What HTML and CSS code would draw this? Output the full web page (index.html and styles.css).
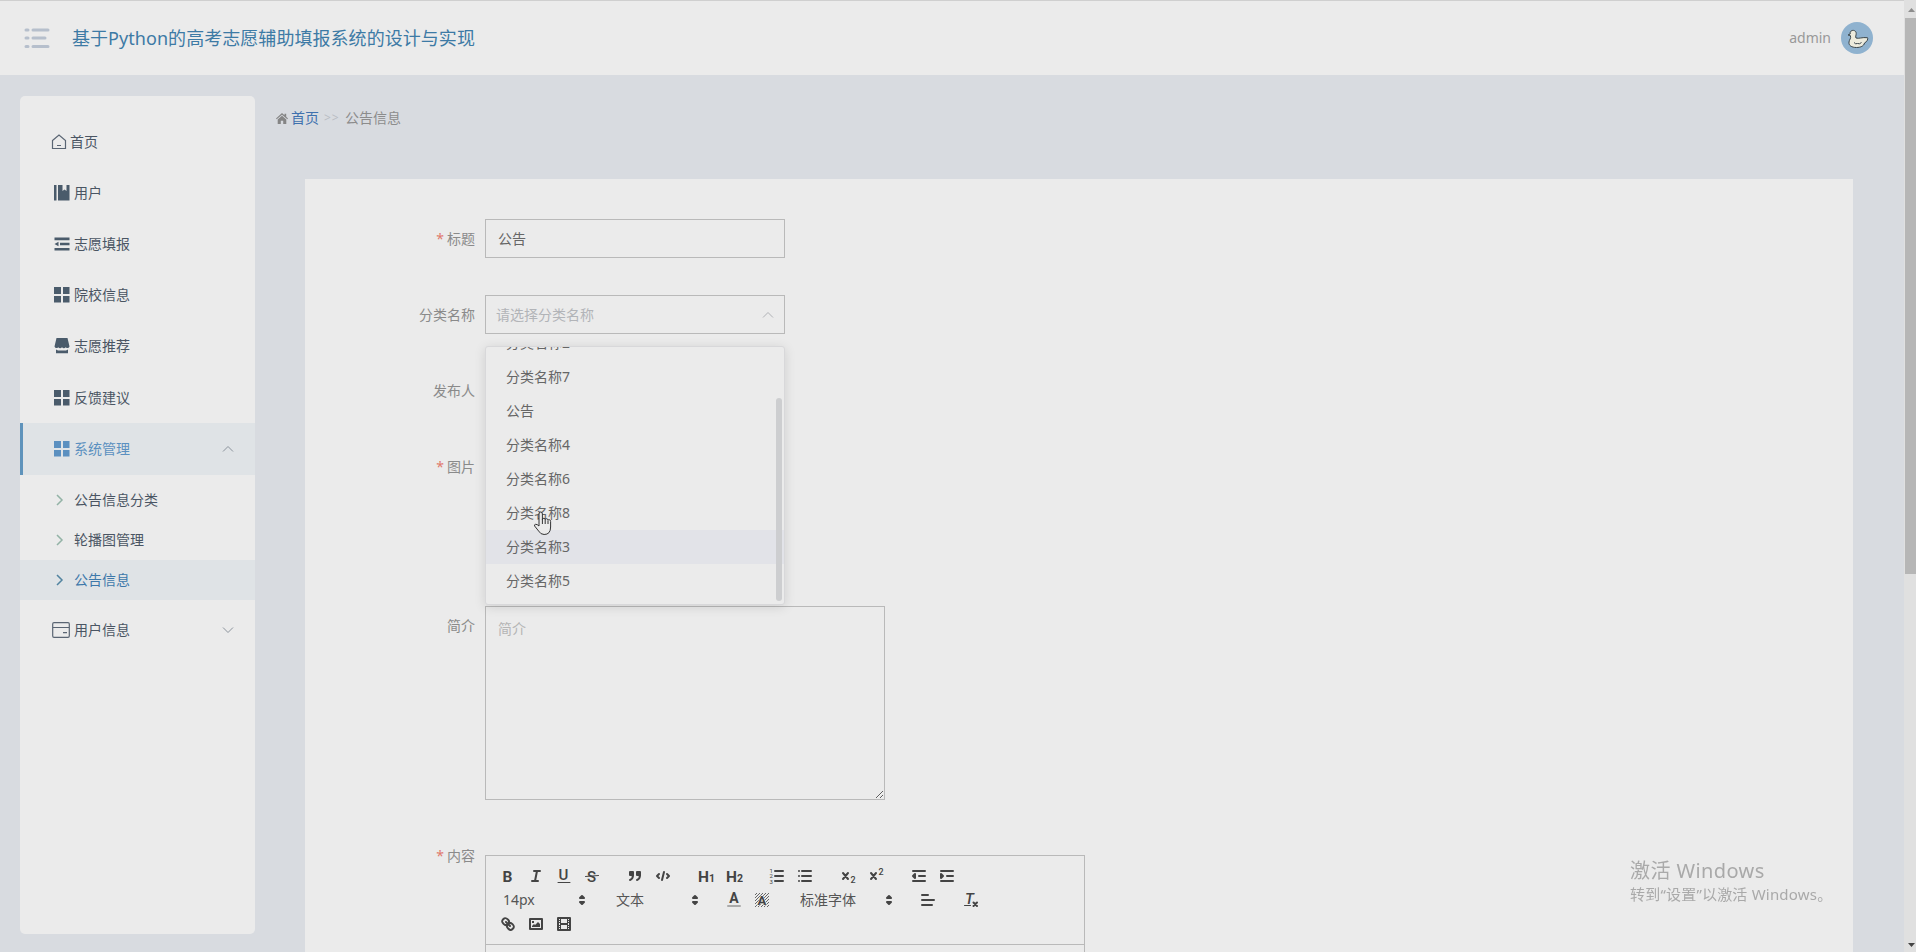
FILE: index.html
```
<!DOCTYPE html>
<html lang="zh-CN">
<head>
  <meta charset="UTF-8">
  <title>基于Python的高考志愿辅助填报系统的设计与实现</title>
  <link rel="stylesheet" href="styles.css">
</head>
<body>
  <div class="page">
    <header class="header">
      <svg class="fold" width="28" height="22" viewBox="0 0 28 22">
        <path d="M2 3h2M9 3h15M2 11h2M9 11h12M2 19.500h2M9 19.500h15"/>
      </svg>
      <h1>基于Python的高考志愿辅助填报系统的设计与实现</h1>
      <span class="user">admin</span>
      <svg class="avatar" width="32" height="32" viewBox="0 0 32 32">
        <circle cx="16" cy="16" r="16" fill="#8fb2cf"/>
        <path d="M7 13l2.200-1c-1-4.500 6-5 6-.5 0 2-1 3-.2 4.500 3 1 6-1 11.500-.3.800 1-.2 4-3 5.300-.5 3-4 4.500-8 4.500-5 0-8-2-7.500-5.500.2-2.500 2.500-3.500 1.300-6.500z" fill="#ecebdd" stroke="#39454b" stroke-linejoin="round"/>
        <path d="M13 20.500q1.500 2 3.500 1 2 1 4-1" fill="none" stroke="#39454b"/>
      </svg>
    </header>

    <div class="layout">
      <nav class="sidebar">
        <a class="item home">
          <svg width="16" height="16" viewBox="0 0 16 16" class="line"><path d="M1.500 6.500L8 1l6.500 5.500v8h-13zM6 11.500h4"/></svg>首页
        </a>
        <a class="item">
          <svg width="16" height="16" viewBox="0 0 16 16"><path d="M0 0h2.500v15.500H0zM4 0h4.500v6l2-1.500 2 1.500V0h3v15.500H4z"/></svg>用户
        </a>
        <a class="item">
          <svg width="16" height="16" viewBox="0 0 16 16"><path d="M.5 1.500h15v2.700H.5zM6 6.800h9.500v2.500H6zM.5 8l4-2.300v4.600zM.5 12h15v2.500H.5z"/></svg>志愿填报
        </a>
        <a class="item">
          <svg width="16" height="16" viewBox="0 0 16 16"><path d="M0 0h7v7H0zM9 0h6.500v7H9zM0 9h7v6.500H0zM9 9h6.500v6.500H9z"/></svg>院校信息
        </a>
        <a class="item">
          <svg width="16" height="16" viewBox="0 0 16 16"><path d="M2.500 0h11l2 8.500c-1 2-2.500 2-3.700.700-1.300 1.300-2.500 1.300-3.800 0-1.300 1.300-2.500 1.300-3.800 0C3 10.500 1.500 10.500.5 8.500zM2 11.500l2 1h8l2-1v3.800H2z"/></svg>志愿推荐
        </a>
        <a class="item">
          <svg width="16" height="16" viewBox="0 0 16 16"><path d="M0 0h7v7H0zM9 0h6.500v7H9zM0 9h7v6.500H0zM9 9h6.500v6.500H9z"/></svg>反馈建议
        </a>
        <a class="item active">
          <svg width="16" height="16" viewBox="0 0 16 16"><path d="M0 0h7v7H0zM9 0h6.500v7H9zM0 9h7v6.500H0zM9 9h6.500v6.500H9z"/></svg>系统管理
          <svg class="arrow" width="12" height="8" viewBox="0 0 12 8"><path d="M1 6.500l5-5 5 5"/></svg>
        </a>
        <div class="submenu">
          <a class="sub"><svg width="8" height="12" viewBox="0 0 8 12"><path d="M1 1l5 5-5 5"/></svg>公告信息分类</a>
          <a class="sub"><svg width="8" height="12" viewBox="0 0 8 12"><path d="M1 1l5 5-5 5"/></svg>轮播图管理</a>
          <a class="sub current"><svg width="8" height="12" viewBox="0 0 8 12"><path d="M1 1l5 5-5 5"/></svg>公告信息</a>
        </div>
        <a class="item card">
          <svg width="18" height="16" viewBox="0 0 18 16" class="line"><path d="M.7 2Q.7.700 2 .700h14q1.300 0 1.300 1.300v12q0 1.300-1.300 1.300H2Q.7 15.300.7 14zM.7 5.500h16.600M11 10.700h4"/></svg>用户信息
          <svg class="arrow" width="12" height="8" viewBox="0 0 12 8"><path d="M1 1.500l5 5 5-5"/></svg>
        </a>
      </nav>

      <main class="content">
        <div class="breadcrumb">
          <svg width="12" height="11" viewBox="0 0 12 11"><path d="M6 0l2.500 2.300V.8h1.700v3L12 5.500l-.7.800L6 1.700.7 6.300 0 5.500zM6 2.700l4.300 3.700V11H7.200V7.700H4.800V11H1.700V6.400z"/></svg>
          <a>首页</a><span class="sep">&gt;&gt;</span><span>公告信息</span>
        </div>

        <form class="panel">
          <div class="row">
            <label class="required">标题</label>
            <input class="input" type="text" value="公告">
          </div>
          <div class="row">
            <label>分类名称</label>
            <div class="select">
              <span>请选择分类名称</span>
              <svg width="12" height="8" viewBox="0 0 12 8"><path d="M1 6.500l5-5 5 5"/></svg>
              <ul class="dropdown">
                <li>分类名称2</li>
                <li>分类名称7</li>
                <li>公告</li>
                <li>分类名称4</li>
                <li>分类名称6</li>
                <li>分类名称8</li>
                <li class="hover">分类名称3</li>
                <li>分类名称5</li>
              </ul>
              <i class="drop-thumb"></i>
            </div>
          </div>
          <div class="row">
            <label>发布人</label>
          </div>
          <div class="row upload">
            <label class="required">图片</label>
          </div>
          <div class="row">
            <label>简介</label>
            <textarea class="textarea" placeholder="简介"></textarea>
          </div>
          <div class="row">
            <label class="required">内容</label>
            <div class="editor">
              <div class="toolbar">
                <span class="formats">
                  <svg viewBox="0 0 18 18"><text x="3.500" y="14.800" class="b" font-size="15.500">B</text></svg>
                  <svg viewBox="0 0 18 18"><path class="slant" d="M7 4h6M5 14h6M8 14l2-10"/></svg>
                  <svg viewBox="0 0 18 18"><text x="3.600" y="13" font-size="15" class="m">U</text><path class="thin" d="M3 15.500h12"/></svg>
                  <svg viewBox="0 0 18 18"><text x="4" y="14.500" font-size="15" class="m">S</text><path class="thin" d="M2.500 9.500l13-1"/></svg>
                </span>
                <span class="formats">
                  <svg viewBox="0 0 18 18"><path class="both" d="M4 5h3v3H4zM11 5h3v3h-3z"/><path d="M7 8c0 4-3 5-3 5M14 8c0 4-3 5-3 5"/></svg>
                  <svg viewBox="0 0 18 18"><path d="M5 7L3 9l2 2M13 7l2 2-2 2M10 5L8 13"/></svg>
                </span>
                <span class="formats">
                  <svg viewBox="0 0 18 18"><text x="1" y="14.500" class="b" font-size="15.500">H</text><text x="12" y="14.500" class="b" font-size="10.500">1</text></svg>
                  <svg viewBox="0 0 18 18"><text x="1" y="14.500" class="b" font-size="15.500">H</text><text x="12" y="14.500" class="b" font-size="10.500">2</text></svg>
                </span>
                <span class="formats">
                  <svg viewBox="0 0 18 18"><path d="M7 4h8M7 9h8M7 14h8"/><text x="1.500" y="6" font-size="6">1</text><text x="1.500" y="11" font-size="6">2</text><text x="1.500" y="16.500" font-size="6">3</text></svg>
                  <svg viewBox="0 0 18 18"><path d="M6 4h9M6 9h9M6 14h9M3 4h0M3 9h0M3 14h0"/></svg>
                </span>
                <span class="formats">
                  <svg viewBox="0 0 18 18"><path d="M4 6l5 6M9 6l-5 6"/><text x="11.500" y="15.500" class="m" font-size="9">2</text></svg>
                  <svg viewBox="0 0 18 18"><path d="M4 6l5 6M9 6l-5 6"/><text x="11.500" y="8" class="m" font-size="9">2</text></svg>
                </span>
                <span class="formats">
                  <svg viewBox="0 0 18 18"><path d="M3 14h12M3 4h12M9 9h6"/><path class="both" d="M5 7v4L3 9z"/></svg>
                  <svg viewBox="0 0 18 18"><path d="M3 14h12M3 4h12M9 9h6"/><path class="both" d="M3 7v4l2-2z"/></svg>
                </span>
                <span class="formats">
                  <span class="picker">14px<svg viewBox="0 0 18 18"><path class="both" d="M7 11l2 2 2-2zM7 7l2-2 2 2z"/></svg></span>
                </span>
                <span class="formats">
                  <span class="picker">文本<svg viewBox="0 0 18 18"><path class="both" d="M7 11l2 2 2-2zM7 7l2-2 2 2z"/></svg></span>
                </span>
                <span class="formats">
                  <svg viewBox="0 0 18 18"><text x="4.300" y="12" class="b" font-size="14">A</text><path class="bar" d="M3 15h12"/></svg>
                  <svg viewBox="0 0 18 18">
                    <defs><pattern id="hatch" width="3" height="3" patternUnits="userSpaceOnUse"><path class="hatch" d="M-1 1l2-2M0 3l3-3M2 4l2-2"/></pattern></defs>
                    <path class="hatched" d="M2 2h14v14H2z"/><text x="4.500" y="14" class="b halo" font-size="13">A</text>
                  </svg>
                </span>
                <span class="formats">
                  <span class="picker font">标准字体<svg viewBox="0 0 18 18"><path class="both" d="M7 11l2 2 2-2zM7 7l2-2 2 2z"/></svg></span>
                </span>
                <span class="formats">
                  <svg viewBox="0 0 18 18"><path d="M3 4h6M5 9h10M3 9h2M3 14h10"/></svg>
                </span>
                <span class="formats">
                  <svg viewBox="0 0 18 18"><text x="3" y="13" class="m it" font-size="15">T</text><path class="thin" d="M2.500 14.500h6"/><path d="M11.500 11.500l3.500 3.500M15 11.500L11.500 15"/></svg>
                </span>
                <span class="formats">
                  <svg viewBox="0 0 18 18"><path d="M7 7l4 4M8.900 4.577a3.476 3.476 0 0 1 .36 4.679A3.476 3.476 0 0 1 4.577 8.900C3.185 7.500 2.035 6.400 4.217 4.217S7.500 3.185 8.900 4.577zM13.423 9.100a3.476 3.476 0 0 0-4.679-.36 3.476 3.476 0 0 0 .36 4.679c1.392 1.392 2.500 2.542 4.679.36s1.032-3.279-.36-4.679z"/></svg>
                  <svg viewBox="0 0 18 18"><path d="M3 4h12v10H3z"/><path class="fill" d="M5 12v-1l2-2 1 1 3-3 2 2v3zM5 6h2v2H5z"/></svg>
                  <svg viewBox="0 0 18 18"><path d="M3 3h12v12H3z"/><path class="fill" d="M5 3h1v12H5zM12 3h1v12h-1zM5 8h8v2H5zM3 5h3v1H3zM3 7h3v1H3zM3 10h3v1H3zM3 12h3v1H3zM12 5h3v1h-3zM12 7h3v1h-3zM12 10h3v1h-3zM12 12h3v1h-3z"/></svg>
                </span>
              </div>
            </div>
          </div>
        </form>
      </main>
    </div>
  </div>

  <div class="scrollbar">
    <svg width="11" height="18" viewBox="0 0 11 18"><path fill="#8d8d8d" d="M3 12l3.500-4 3.500 4z"/></svg>
    <div class="thumb"></div>
    <svg class="down" width="11" height="14" viewBox="0 0 11 14"><path fill="#444" d="M3 5h7L6.500 9z"/></svg>
  </div>

  <div class="watermark">
    <p class="big">激活 Windows</p>
    <p>转到“设置”以激活 Windows。</p>
  </div>

  <svg class="cursor" width="20" height="26" viewBox="0 0 20 26">
    <path d="M6 15V3q0-2 1.700-2t1.700 2v5.500q0-1.200 1.400-1.200t1.400 1.400q0-1 1.400-1t1.400 1.700q0-.8 1.300-.7t1.300 1.800V16q0 7.500-6.500 7.500-3.500 0-5.500-3.500l-4-5q-.5-1.500 1-1.700T6 15z"/>
    <path d="M9.400 8v5M12.200 9v4M15 10v3"/>
  </svg>
</body>
</html>
```
FILE: styles.css
```
* {
  box-sizing: border-box;
}
body {
  margin: 0;
  display: flex;
  height: 952px;
  overflow: hidden;
  background: #d8dbe0;
  color: #666;
  font: 14px/20px "Noto Sans", "Noto Sans CJK SC", sans-serif;
}
.page {
  width: 1904px;
  height: 952px;
  overflow: hidden;
}

/* header */
.header {
  display: flex;
  align-items: center;
  height: 75px;
  padding: 0 31px 0 24px;
  background: #ebebeb;
  border-top: 1px solid #cfcfcf;
}
.header h1 {
  margin: 0 auto 0 20px;
  color: #3d7aa5;
  font-size: 18px;
  font-weight: 400;
  line-height: 26px;
  letter-spacing: 0.05px;
}
.fold path {
  fill: none;
  stroke: #b6bfcc;
  stroke-width: 3;
  stroke-linecap: round;
}
.user {
  margin-right: 10px;
  padding-bottom: 1px;
  color: #999;
  font-size: 14px;
}

/* sidebar */
.layout {
  display: flex;
  align-items: flex-start;
}
.sidebar {
  width: 235px;
  height: 838px;
  margin: 21px 0 0 20px;
  padding-top: 20px;
  background: #ebebeb;
  border-radius: 5px;
}
.item {
  display: flex;
  align-items: center;
  height: 51.2px;
  padding: 0 21px 0 33.5px;
  gap: 4.5px;
  color: #4a5563;
}
.item > svg {
  fill: #4a5b6b;
}
.item .line {
  fill: none;
  stroke: #5a6573;
  stroke-width: 1.2;
}
.home {
  padding-left: 31px;
  gap: 3px;
}
.card {
  padding-left: 32px;
  gap: 4px;
}
.item .arrow {
  margin-left: auto;
  fill: none;
  stroke: #8b939c;
}
.item.active {
  height: 52px;
  padding-left: 30.5px;
  background: #dfe3e6;
  border-left: 3px solid #5f93bb;
  color: #5b90c0;
}
.item.active > svg:first-child {
  fill: #5b90c0;
}
.submenu {
  padding: 5px 0 4px;
}
.sub {
  display: flex;
  align-items: center;
  height: 40px;
  padding-left: 36px;
  gap: 10px;
  color: #4a5563;
}
.sub svg {
  fill: none;
  stroke: #93b3a6;
  stroke-width: 1.5;
}
.sub.current {
  background: #dfe3e6;
  color: #3d78aa;
}
.sub.current svg {
  stroke: #5284a0;
}

/* content */
.content {
  width: 1598px;
  padding: 33px 0 0 20px;
}
.breadcrumb {
  display: flex;
  align-items: center;
  height: 20px;
  color: #8c8c8c;
}
.breadcrumb svg {
  margin: 0 3px 0 1px;
  fill: #858585;
}
.breadcrumb a {
  color: #3f71ae;
}
.breadcrumb .sep {
  width: 26px;
  padding-left: 5px;
  color: #b9bdc4;
  font-size: 12px;
  letter-spacing: 1px;
}
.panel {
  display: flex;
  flex-direction: column;
  gap: 36px;
  width: 1548px;
  height: 1100px;
  margin: 51px 0 0 30px;
  padding: 40px 0 0 80px;
  background: #ebebeb;
}
.row {
  display: flex;
  flex: none;
  align-items: flex-start;
  min-height: 40px;
}
.row label {
  width: 100px;
  padding-right: 10px;
  color: #8a8a8a;
  line-height: 40px;
  text-align: right;
}
.required::before {
  content: "*";
  margin-right: 3px;
  color: #e07a6c;
}
.upload {
  height: 123px;
}
.input,
.select {
  width: 300px;
  height: 39px;
  padding: 0 12px 2px;
  background: #ebebeb;
  border: 1px solid #b9b9b9;
  color: #666;
  font: inherit;
}
.select {
  position: relative;
  display: flex;
  align-items: center;
  justify-content: space-between;
  padding: 0 10px;
  color: #b2b4b8;
}
.select svg {
  fill: none;
  stroke: #b0b2b6;
}
.dropdown {
  position: absolute;
  z-index: 5;
  top: 50px;
  left: -1px;
  display: flex;
  flex-direction: column;
  justify-content: flex-end;
  width: 300px;
  height: 259px;
  margin: 0;
  padding: 0 0 6px;
  overflow: hidden;
  list-style: none;
  background: #ebebeb;
  border: 1px solid #d8d8da;
  border-radius: 3px;
  box-shadow: 0 2px 12px rgba(0, 0, 0, 0.12);
}
.dropdown li {
  flex: none;
  height: 34px;
  padding-left: 20px;
  color: #666;
  line-height: 34px;
}
.dropdown .hover {
  background: #e2e3e8;
}
.drop-thumb {
  position: absolute;
  z-index: 6;
  top: 102px;
  left: 290px;
  width: 6px;
  height: 203px;
  background: #cdced0;
  border-radius: 3px;
}
.textarea {
  width: 400px;
  height: 194px;
  padding: 12px;
  background: #ebebeb;
  border: 1px solid #b9b9b9;
  font: inherit;
  resize: both;
}
.textarea::placeholder {
  color: #b5b5b5;
}

/* rich text editor */
.editor {
  width: 600px;
  height: 300px;
  margin-top: 19px;
  border: 1px solid #b9b9b9;
}
.toolbar {
  display: flex;
  flex-wrap: wrap;
  padding: 8px;
  border-bottom: 1px solid #b9b9b9;
}
.formats {
  display: flex;
  margin-right: 15px;
}
.toolbar svg {
  width: 28px;
  height: 24px;
  padding: 3px 5px;
  fill: #444;
  font-family: Roboto, sans-serif;
}
.toolbar path {
  fill: none;
  stroke: #444;
  stroke-width: 2;
  stroke-linecap: round;
  stroke-linejoin: round;
}
.toolbar .both {
  fill: #444;
}
.toolbar .fill {
  fill: #444;
  stroke: none;
}
.toolbar .thin {
  stroke-width: 1;
}
.toolbar .bar {
  stroke: #aaa;
}
.toolbar .hatch {
  stroke-width: 0.8;
}
.toolbar .hatched {
  fill: url(#hatch);
  stroke: none;
}
.toolbar .b {
  font-weight: 700;
}
.toolbar .m {
  font-weight: 500;
}
.toolbar .it {
  font-style: italic;
}
.toolbar .halo {
  paint-order: stroke;
  stroke: #ebebeb;
  stroke-width: 1;
}
.picker {
  display: flex;
  align-items: center;
  justify-content: space-between;
  width: 98px;
  height: 24px;
  padding-left: 9px;
  color: #555;
}
.picker.font {
  width: 108px;
}
.picker svg {
  width: 20px;
  padding: 3px 1px;
}

/* window scrollbar */
.scrollbar {
  display: flex;
  flex-direction: column;
  width: 12px;
  padding-left: 1px;
  background: #e0e0e0;
}
.thumb {
  height: 556px;
  background: #b6b6b6;
}
.scrollbar .down {
  margin-top: auto;
}

.watermark {
  position: fixed;
  top: 857px;
  left: 1630px;
  color: #a9a9a9;
  font-size: 15px;
  letter-spacing: 0.2px;
}
.watermark p {
  margin: 0;
  line-height: 21px;
}
.watermark .big {
  font-size: 20px;
  line-height: 27px;
  letter-spacing: 0.4px;
}
.cursor {
  position: fixed;
  top: 511px;
  left: 533px;
  z-index: 10;
  fill: #ebebeb;
  stroke: #333;
}
```
